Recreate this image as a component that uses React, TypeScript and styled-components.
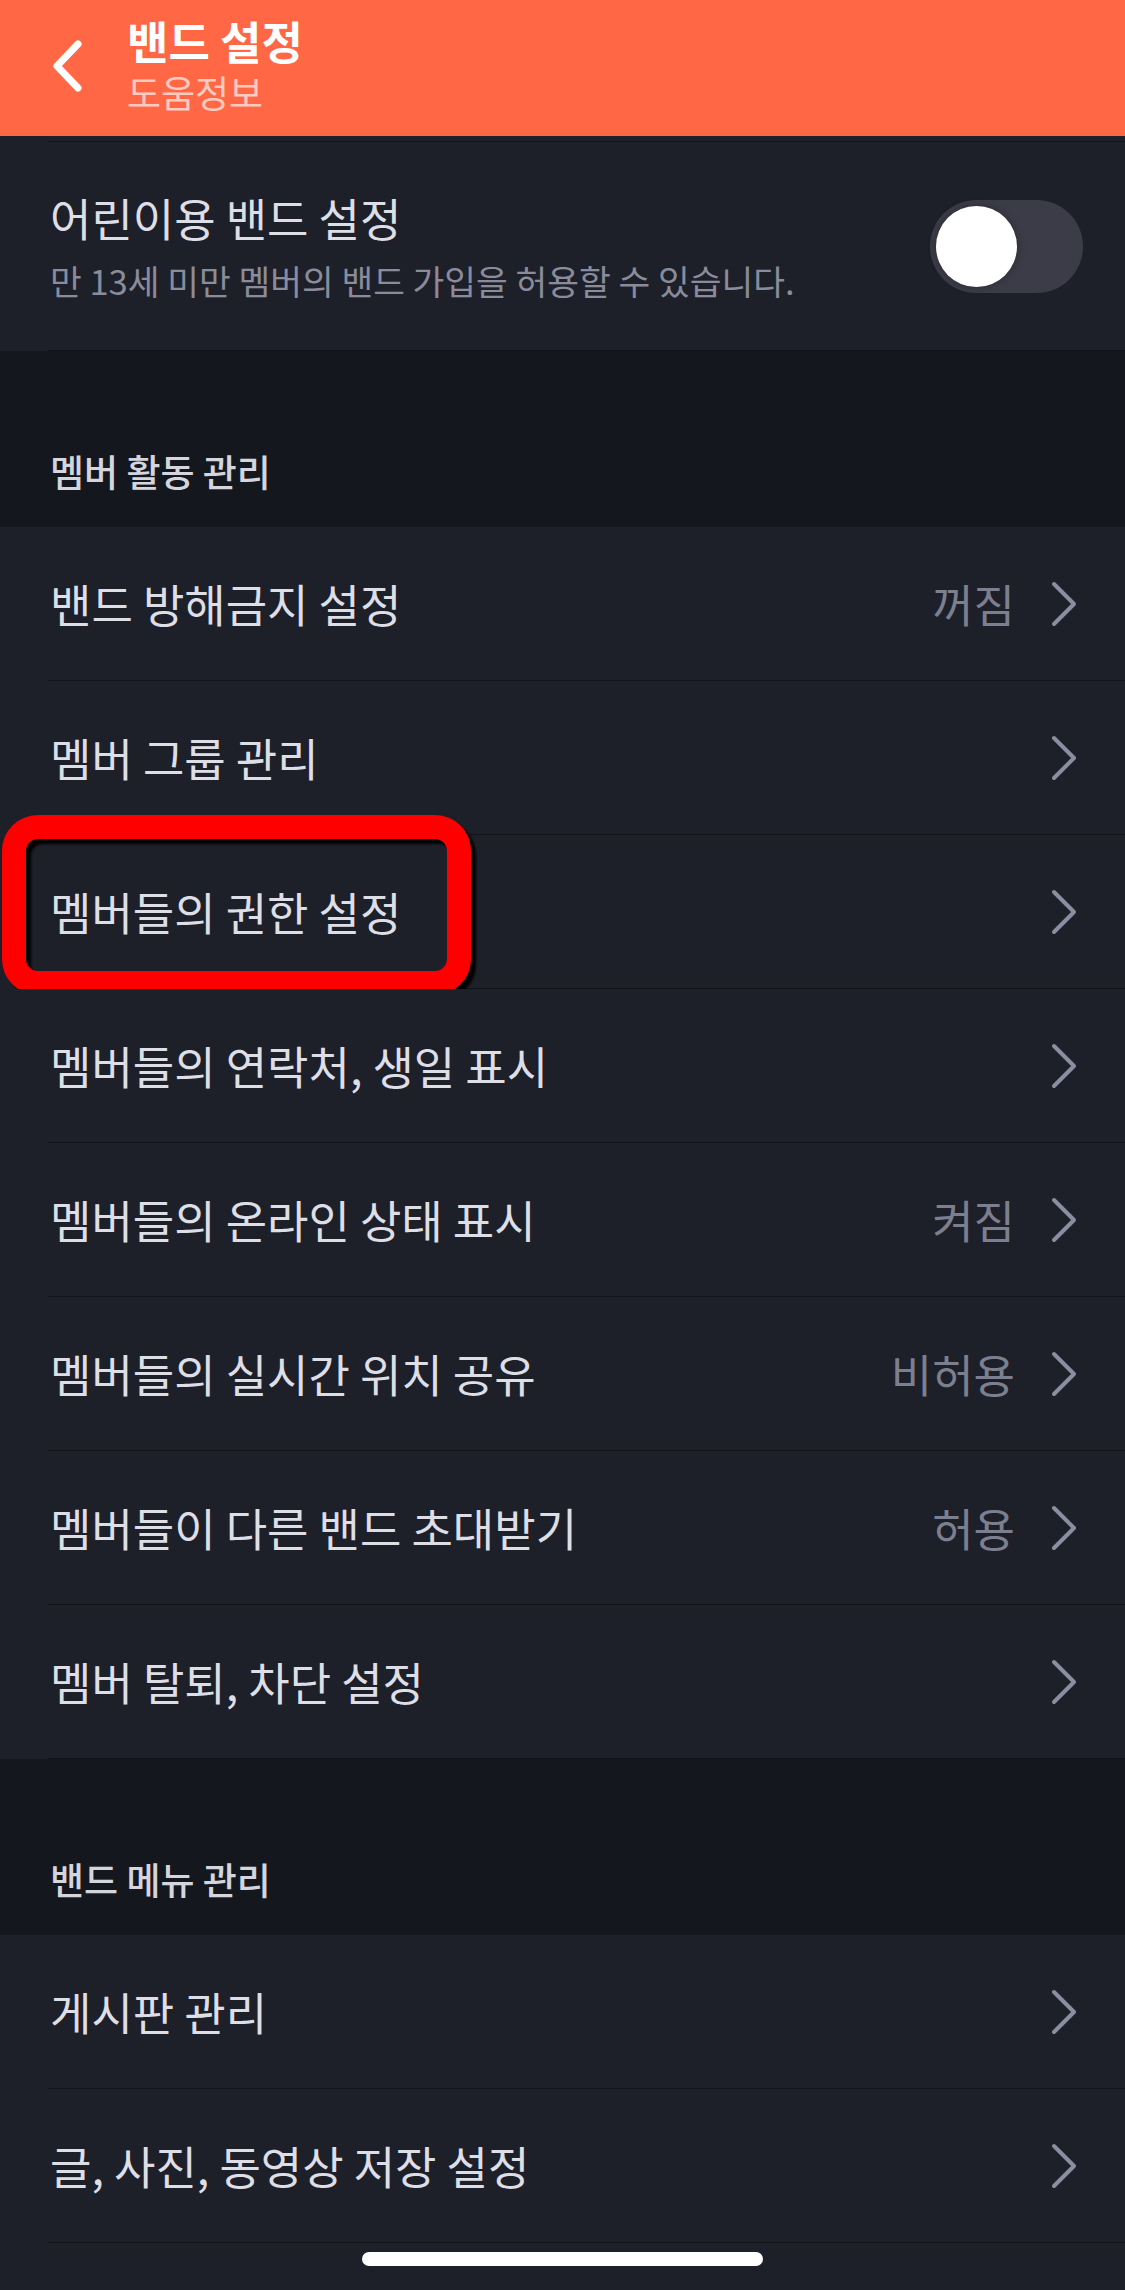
import React from "react";
import styled, { createGlobalStyle } from "styled-components";

const GlobalStyle = createGlobalStyle`
  html, body {
    margin: 0;
    padding: 0;
    background: #1e2029;
  }
  body {
    font-family: "Noto Sans CJK KR", "Noto Sans", sans-serif;
    -webkit-font-smoothing: antialiased;
  }
  * { box-sizing: border-box; }
`;

const Page = styled.div`
  width: 1125px;
  min-height: 2290px;
  background: #1e2029;
  display: flex;
  flex-direction: column;
`;

const Header = styled.header`
  height: 136px;
  background: #ff6745;
  display: flex;
  align-items: flex-start;
  padding-top: 15px;
`;

const BackButton = styled.button`
  margin: 25px 0 0 52px;
  padding: 0;
  border: none;
  background: transparent;
  width: 30px;
  height: 52px;
  display: flex;
`;

const TitleBlock = styled.div`
  margin-left: 45px;
  display: flex;
  flex-direction: column;
`;

const HeaderTitle = styled.h1`
  margin: 0;
  font-size: 45px;
  line-height: 52px;
  font-weight: 700;
  color: #ffffff;
`;

const HeaderSub = styled.div`
  margin-top: 4px;
  font-size: 37px;
  line-height: 42px;
  color: rgba(255, 255, 255, 0.68);
`;

const TopSection = styled.section`
  background: #1e2029;
  padding-top: 5px;
`;

const TopInner = styled.div`
  margin-left: 48px;
  height: 210px;
  border-top: 1px solid #131419;
  border-bottom: 1px solid #131419;
  display: flex;
  align-items: center;
  padding: 0 42px 0 2px;
`;

const TextCol = styled.div`
  flex: 1;
  display: flex;
  flex-direction: column;
`;

const TopTitle = styled.div`
  font-size: 45px;
  line-height: 54px;
  color: #dddee6;
`;

const TopSub = styled.div`
  margin-top: 14px;
  font-size: 34.5px;
  line-height: 42px;
  color: #8a8c9b;
`;

const Toggle = styled.div<{ $on?: boolean }>`
  width: 153px;
  height: 93px;
  border-radius: 47px;
  background: ${(p) => (p.$on ? "#ff6745" : "#3b3c47")};
  display: flex;
  align-items: center;
  justify-content: ${(p) => (p.$on ? "flex-end" : "flex-start")};
  padding: 0 6px;
`;

const Knob = styled.div`
  width: 81px;
  height: 81px;
  border-radius: 50%;
  background: #ffffff;
  box-shadow: 0 0 8px rgba(0, 0, 0, 0.3);
`;

const Band = styled.div`
  height: 176px;
  background: #15171f;
  display: flex;
  align-items: flex-end;
  padding: 0 0 34px 50px;
`;

const BandLabel = styled.h2`
  margin: 0;
  font-size: 37px;
  line-height: 44px;
  font-weight: 500;
  color: #d4d5dd;
`;

const Row = styled.div`
  position: relative;
  padding-left: 48px;
  background: #1e2029;
`;

const RowInner = styled.div`
  height: 154px;
  border-bottom: 1px solid #131419;
  display: flex;
  align-items: center;
  padding: 0 48px 0 2px;
`;

const RowTitle = styled.div`
  flex: 1;
  font-size: 45px;
  line-height: 54px;
  color: #dddee6;
`;

const RowValue = styled.div`
  font-size: 45px;
  line-height: 54px;
  color: #7c7f8f;
  margin-right: 36px;
`;

const Chevron = styled.svg`
  width: 26px;
  height: 46px;
  flex-shrink: 0;
`;

const Highlight = styled.div`
  position: absolute;
  left: 2px;
  top: -20px;
  width: 469px;
  height: 180px;
  border: 24px solid #ff0000;
  border-radius: 36px;
  filter: drop-shadow(5px 5px 1px rgba(0, 0, 0, 0.95));
  pointer-events: none;
`;

const Footer = styled.div`
  height: 47px;
  display: flex;
  justify-content: center;
  padding-top: 9px;
`;

const HomeIndicator = styled.div`
  width: 401px;
  height: 14px;
  border-radius: 7px;
  background: #ffffff;
`;

const ChevronRight = () => (
  <Chevron viewBox="0 0 26 46">
    <polyline
      points="3,3 23,23 3,43"
      fill="none"
      stroke="#8b8ea0"
      strokeWidth="4"
      strokeLinecap="round"
      strokeLinejoin="round"
    />
  </Chevron>
);

type Item = { title: string; value?: string; highlight?: boolean };

const memberItems: Item[] = [
  { title: "밴드 방해금지 설정", value: "꺼짐" },
  { title: "멤버 그룹 관리" },
  { title: "멤버들의 권한 설정", highlight: true },
  { title: "멤버들의 연락처, 생일 표시" },
  { title: "멤버들의 온라인 상태 표시", value: "켜짐" },
  { title: "멤버들의 실시간 위치 공유", value: "비허용" },
  { title: "멤버들이 다른 밴드 초대받기", value: "허용" },
  { title: "멤버 탈퇴, 차단 설정" },
];

const menuItems: Item[] = [
  { title: "게시판 관리" },
  { title: "글, 사진, 동영상 저장 설정" },
];

const SettingRow = ({ item }: { item: Item }) => (
  <Row>
    <RowInner>
      <RowTitle>{item.title}</RowTitle>
      {item.value && <RowValue>{item.value}</RowValue>}
      <ChevronRight />
    </RowInner>
    {item.highlight && <Highlight />}
  </Row>
);

export default function App() {
  return (
    <>
      <GlobalStyle />
      <Page>
        <Header>
          <BackButton aria-label="뒤로">
            <svg width="30" height="52" viewBox="0 0 30 52">
              <polyline
                points="26,4 5,26 26,48"
                fill="none"
                stroke="#ffffff"
                strokeWidth="7"
                strokeLinecap="round"
                strokeLinejoin="round"
              />
            </svg>
          </BackButton>
          <TitleBlock>
            <HeaderTitle>밴드 설정</HeaderTitle>
            <HeaderSub>도움정보</HeaderSub>
          </TitleBlock>
        </Header>

        <TopSection>
          <TopInner>
            <TextCol>
              <TopTitle>어린이용 밴드 설정</TopTitle>
              <TopSub>만 13세 미만 멤버의 밴드 가입을 허용할 수 있습니다.</TopSub>
            </TextCol>
            <Toggle>
              <Knob />
            </Toggle>
          </TopInner>
        </TopSection>

        <Band>
          <BandLabel>멤버 활동 관리</BandLabel>
        </Band>
        {memberItems.map((it) => (
          <SettingRow key={it.title} item={it} />
        ))}

        <Band>
          <BandLabel>밴드 메뉴 관리</BandLabel>
        </Band>
        {menuItems.map((it) => (
          <SettingRow key={it.title} item={it} />
        ))}

        <Footer>
          <HomeIndicator />
        </Footer>
      </Page>
    </>
  );
}
